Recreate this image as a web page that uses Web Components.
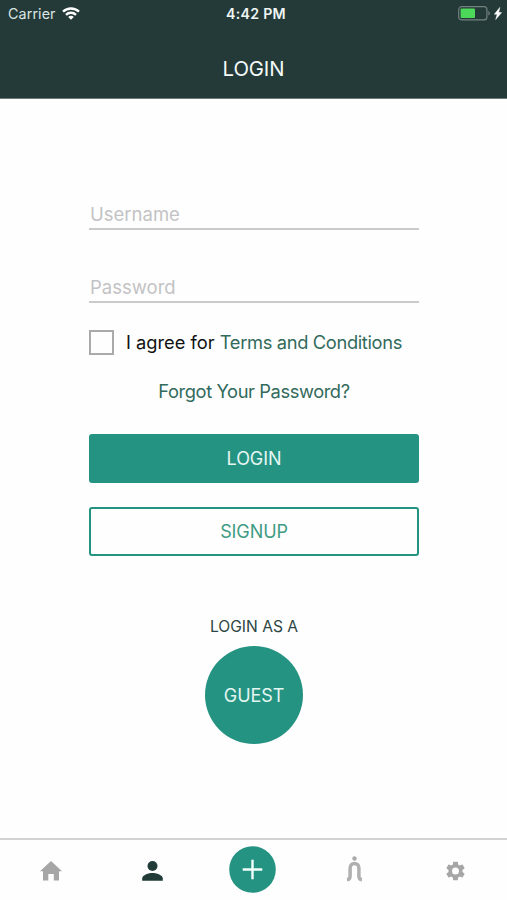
<!DOCTYPE html>
<html lang="en">
<head>
<meta charset="utf-8">
<title>Login</title>
<style>
html,body{margin:0;height:100%;background:#fefefe}
body{font-family:Inter,"Liberation Sans",sans-serif}
</style>
</head>
<body>
<login-screen></login-screen>
<script>
const define = (name, css, html) => customElements.define(name, class extends HTMLElement {
  constructor() {
    super();
    this.attachShadow({ mode: 'open' }).innerHTML =
      `<style>*{box-sizing:border-box}:host{box-sizing:border-box;white-space:nowrap}${css}</style>${html}`;
  }
});

define('status-bar', `
  :host{display:grid;grid-template-columns:1fr auto 1fr;align-items:center;height:26px;padding:0 5px 0 8px;color:#eef5f3}
  .left{display:flex;align-items:center;gap:6px;font-size:14.3px;letter-spacing:.1px;color:#dbe5e3}
  .time{font-size:14.2px;font-weight:600;letter-spacing:.25px;padding-left:2px}
  .right{display:flex;justify-content:flex-end;align-items:center;gap:4px}
  svg{display:block}`, `
  <div class="left"><span>Carrier</span>
    <svg width="18" height="13" viewBox="0 0 18 13" fill="none" stroke="#fff" stroke-width="2.4">
      <path d="M1 4.700C5.400.400 12.600.400 17 4.700M4 7.800c2.800-2.700 7.200-2.700 10 0"/><path d="M6.200 9.900c1.600-1.500 4-1.500 5.600 0L9 12.700z" fill="#fff" stroke="none"/>
    </svg></div>
  <span class="time">4:42 PM</span>
  <div class="right">
    <svg width="32" height="15" viewBox="0 0 32 15"><rect x=".7" y=".7" width="28.200" height="13.200" rx="3" fill="none" stroke="#71817e" stroke-width="1.200"/><rect x="2.600" y="2.500" width="14.400" height="9.600" rx="1" fill="#4cd858"/><path d="M30.400 4.800q3 2.500 0 5z" fill="#71817e"/></svg>
    <svg width="8" height="13" viewBox="0 0 8 13"><path d="M5.800.400.400 7.200h2.800L1.700 12.500 7.600 5.600H4.700z" fill="#fff" stroke="#fff" stroke-width=".5"/></svg>
  </div>`);

define('app-header', `
  :host{display:flex;flex-direction:column;height:99px;background:#243a38;border-bottom:1px solid #6b7b79}
  h1{margin:0;flex:1;display:flex;align-items:center;justify-content:center;padding-top:12px;font-size:20.3px;font-weight:400;color:#f5f9f8;letter-spacing:-.1px}`, `
  <status-bar></status-bar><h1><slot></slot></h1>`);

define('text-field', `
  :host{display:flex;align-items:flex-end;height:32px;border-bottom:2px solid #cacaca;padding:0 0 2px 1px;font-size:18.5px;line-height:23px;color:#c3c3c5}`,
  `<slot></slot>`);

define('check-row', `
  :host{display:flex;align-items:center;height:26px;gap:12px;font-size:18.3px;color:#111}
  i{width:25px;height:25px;border:2px solid #aaa;background:#fefefe;flex:none}
  ::slotted(a){color:#326a5c;letter-spacing:-.34px}`, `<i></i><span><slot></slot></span>`);

define('action-button', `
  :host{display:flex;align-items:center;justify-content:center;height:49px;border:2px solid #259382;border-radius:3px;background:#259382;color:#e4f6f2;font-size:18px;letter-spacing:-.1px}
  :host([outline]){background:#fefefe;color:#3f9c83}`, `<slot></slot>`);

define('guest-login', `
  :host{display:flex;flex-direction:column;align-items:center}
  .cap{font-size:15.6px;line-height:20px;color:#2c4643;margin-bottom:9px}
  .disc{width:98px;height:98px;border-radius:50%;background:#259382;color:#e4f6f2;display:flex;align-items:center;justify-content:center;font-size:18px;letter-spacing:-.1px}`,
  `<div class="cap">LOGIN AS A</div><div class="disc">GUEST</div>`);

define('tab-bar', `
  :host{display:grid;grid-template-columns:repeat(5,1fr);height:62px;border-top:2px solid #d3d3d3;background:#fefefe}
  div{display:flex;align-items:center;justify-content:center;padding-top:1px}
  svg{display:block}
  .add{padding:0 1px 2px 0}
  .walk{padding:0 0 2px}
  .gear{padding:1px 2px 0 0}`, `
  <div><svg width="22" height="20" viewBox="0 0 22 20"><path d="M11 0 22 10.200h-3V19.500h-5.200V13H8.300v6.500H3V10.200H0z" fill="#a6a6a6"/></svg></div>
  <div><svg width="21" height="20" viewBox="0 0 21 20" fill="#213c38"><circle cx="10.500" cy="5" r="5"/><path d="M.2 19.700v-2.200C.2 13.800 7 12 10.500 12s10.300 1.800 10.300 5.500v2.200z"/></svg></div>
  <div class="add"><svg width="47" height="47" viewBox="0 0 47 47"><circle cx="23.500" cy="23.500" r="23.300" fill="#259382"/><path d="M23.500 13.700v19.600M13.700 23.500h19.600" stroke="#f2fffc" stroke-width="2.400"/></svg></div>
  <div class="walk"><svg width="17" height="26" viewBox="0 0 17 26" fill="none" stroke="#b0b0b0" stroke-width="3.500"><path d="M1 23.700c2.400-.3 3.100-1.500 3.100-3.500v-8.200c0-6 8.800-6 8.800 0v8.200c0 2 .7 3.200 3.100 3.500"/><circle cx="8.500" cy="2.500" r="2.200" fill="#aaa" stroke="none"/></svg></div>
  <div class="gear"><svg width="19" height="20" viewBox="2.250 2 19.500 20" fill="#a6a6a6"><path d="M19.140 12.940c.04-.3.06-.61.06-.94 0-.32-.02-.64-.07-.94l2.030-1.580c.18-.14.230-.41.120-.61l-1.920-3.320c-.12-.22-.37-.29-.59-.22l-2.390.96c-.5-.38-1.030-.7-1.620-.94L14.400 2.810c-.04-.24-.24-.41-.48-.41h-3.840c-.24 0-.43.17-.47.41l-.36 2.540c-.59.24-1.130.57-1.620.94l-2.390-.96c-.22-.08-.47 0-.59.22L2.740 8.870c-.12.210-.08.470.120.610l2.030 1.580c-.05.3-.09.630-.09.940s.02.640.07.940l-2.030 1.580c-.18.140-.23.410-.12.610l1.920 3.320c.12.220.37.290.59.220l2.390-.96c.5.380 1.030.7 1.620.940l.36 2.540c.05.240.24.410.48.410h3.840c.24 0 .44-.17.470-.41l.36-2.540c.59-.24 1.130-.56 1.620-.94l2.390.96c.22.080.47 0 .59-.22l1.920-3.320c.12-.22.070-.47-.12-.61l-2.010-1.580zM12 15.600a3.600 3.600 0 1 1 0-7.200 3.600 3.600 0 0 1 0 7.200z"/></svg></div>`);

define('login-screen', `
  :host{display:flex;flex-direction:column;height:900px;overflow:hidden;background:#fefefe}
  main{flex:1;display:flex;flex-direction:column;width:330px;margin-left:89px;padding-top:99px}
  .pw{margin-top:41px}
  check-row{margin-top:26px}
  .forgot{margin-top:24px;height:24px;line-height:24px;text-align:center;font-size:18.3px;letter-spacing:-.4px;color:#326a5c}
  .login{margin-top:31px}
  .signup{margin-top:24px}
  guest-login{margin-top:61px}`, `
  <app-header>LOGIN</app-header>
  <main>
    <text-field>Username</text-field>
    <text-field class="pw">Password</text-field>
    <check-row>I agree for <a>Terms and Conditions</a></check-row>
    <div class="forgot">Forgot Your Password?</div>
    <action-button class="login">LOGIN</action-button>
    <action-button class="signup" outline>SIGNUP</action-button>
    <guest-login></guest-login>
  </main>
  <tab-bar></tab-bar>`);
</script>
</body>
</html>
